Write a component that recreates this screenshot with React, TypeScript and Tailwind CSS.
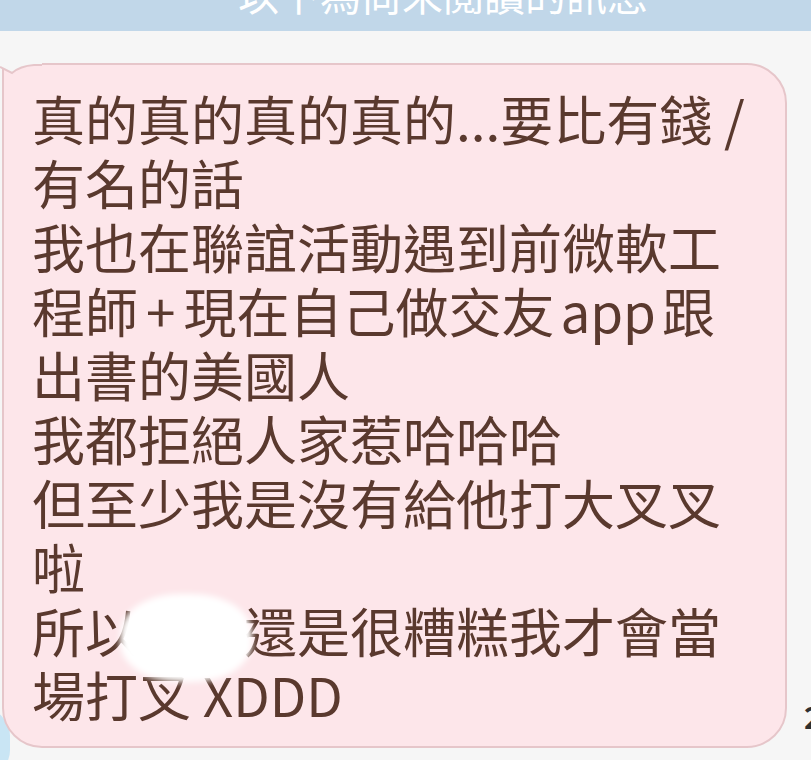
import React from 'react';

const LINES = [
  '真的真的真的真的...要比有錢 /',
  '有名的話',
  '我也在聯誼活動遇到前微軟工',
];

const LINES_AFTER = ['出書的美國人', '我都拒絕人家惹哈哈哈', '但至少我是沒有給他打大叉叉', '啦'];

const font = { fontFamily: '"Noto Sans CJK TC", "Noto Sans", sans-serif' };

const App: React.FC = () => {
  return (
    <div className="relative w-[811px] h-[760px] overflow-hidden bg-[#f6f6f6]" style={font}>
      <div className="h-[31px] overflow-hidden bg-[#c1d7e9]">
        <div className="mt-[-27px] pl-[238px] text-[41px] leading-[41px] text-white whitespace-nowrap">
          以下為尚未閱讀的訊息
        </div>
      </div>

      {/* sender avatar peeking in at the bottom-left */}
      <div className="absolute left-[-46px] top-[708px] w-[56px] h-[70px] rounded-full bg-[#c9e5f4]" />

      <div className="flex items-end mt-[32px] ml-[2px]">
        <div className="relative z-10 shrink-0 w-[785px] h-[685px] rounded-[40px] rounded-tl-none border-2 border-[#e6c6ca] bg-[#fde6ea] pl-[28px] pt-[21px] text-[53px] leading-[64px] text-[#5a392e]">
          <svg className="absolute left-[-4px] top-[-3px]" width="42" height="16" viewBox="0 0 42 16">
            <path d="M0 0 H42 V3 H34 Q20 4 12 11 Q6 8 0 5 Z" fill="#f6f6f6" />
            <path d="M0 5 Q6 8 12 11 Q20 4 34 3 H42" fill="none" stroke="#e6c6ca" strokeWidth="2" />
          </svg>
          {LINES.map((line) => (
            <div key={line} className="whitespace-nowrap">{line}</div>
          ))}
          <div className="whitespace-nowrap">
            程師<span className="mx-[8px]">+</span>現在自己做交友<span className="mx-[6px]">app</span>跟
          </div>
          {LINES_AFTER.map((line) => (
            <div key={line} className="whitespace-nowrap">{line}</div>
          ))}
          <div className="relative whitespace-nowrap">
            所以{'\u3000\u3000'}還是很糟糕我才會當
            <div className="absolute left-[88px] top-[-4px] w-[132px] h-[88px] rounded-[45%] bg-white blur-[3px]" />
          </div>
          <div className="whitespace-nowrap">場打叉 XDDD</div>
        </div>
        <div className="shrink-0 pl-[17px] mb-[16px] text-[30px] leading-[32px] font-bold text-[#2f2f2f] whitespace-nowrap">
          2
        </div>
      </div>
    </div>
  );
};

export default App;
